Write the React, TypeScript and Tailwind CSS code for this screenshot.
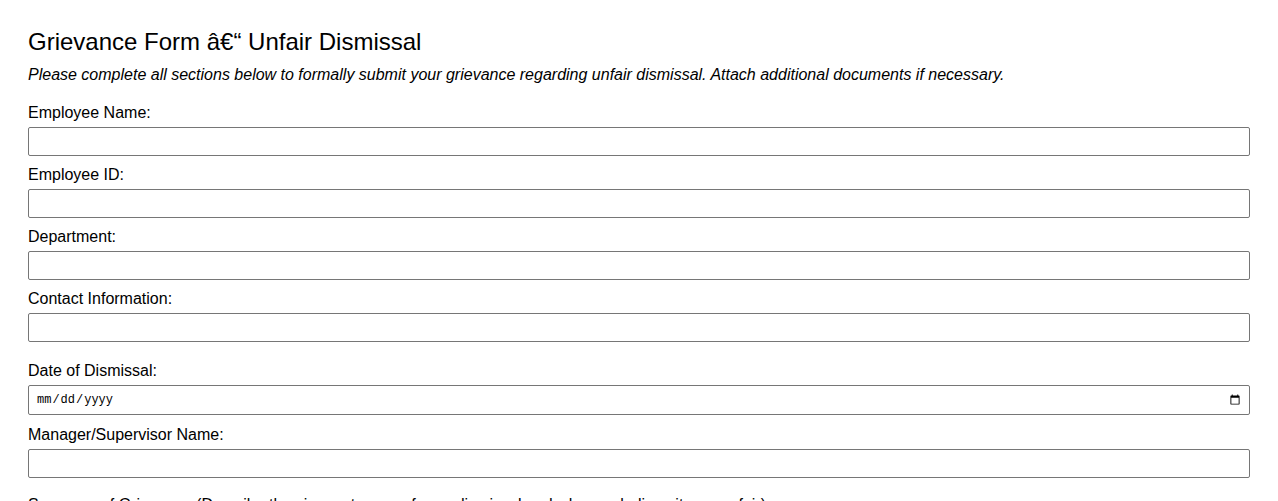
import React from "react";

const labelCls = "block text-[16px] leading-[18px] text-black";
const inputCls =
  "block w-full h-[29px] border border-[#767676] rounded-[2px] bg-white px-[2px] text-[13px] outline-none";

export default function App() {
  return (
    <div
      className="min-h-screen bg-white px-[28px] pt-[28px] text-black"
      style={{ fontFamily: '"Liberation Sans", Arial, sans-serif' }}
    >
      <h2 className="text-[24px] leading-[28px] font-normal">
        Grievance Form â€“ Unfair Dismissal
      </h2>
      <p className="mt-[10px] text-[16px] leading-[18px] italic">
        Please complete all sections below to formally submit your grievance regarding unfair
        dismissal. Attach additional documents if necessary.
      </p>

      <form className="mt-[20px]">
        <label className={labelCls}>Employee Name:</label>
        <input type="text" className={`${inputCls} mt-[5px]`} />

        <label className={`${labelCls} mt-[10px]`}>Employee ID:</label>
        <input type="text" className={`${inputCls} mt-[5px]`} />

        <label className={`${labelCls} mt-[10px]`}>Department:</label>
        <input type="text" className={`${inputCls} mt-[5px]`} />

        <label className={`${labelCls} mt-[10px]`}>Contact Information:</label>
        <input type="text" className={`${inputCls} mt-[5px]`} />

        <label className={`${labelCls} mt-[20px]`}>Date of Dismissal:</label>
        <input
          type="date"
          className="mt-[5px] block w-full h-[30px] border border-[#767676] rounded-[2px] bg-white pl-[7px] pr-[6px] text-[12px] outline-none"
          style={{ fontFamily: '"Liberation Mono", "Courier New", monospace' }}
        />

        <label className={`${labelCls} mt-[11px]`}>Manager/Supervisor Name:</label>
        <input type="text" className={`${inputCls} mt-[5px]`} />

        <label className={`${labelCls} mt-[18px]`}>
          Summary of Grievance (Describe the circumstances of your dismissal and why you believe it
          was unfair):
        </label>
      </form>
    </div>
  );
}
